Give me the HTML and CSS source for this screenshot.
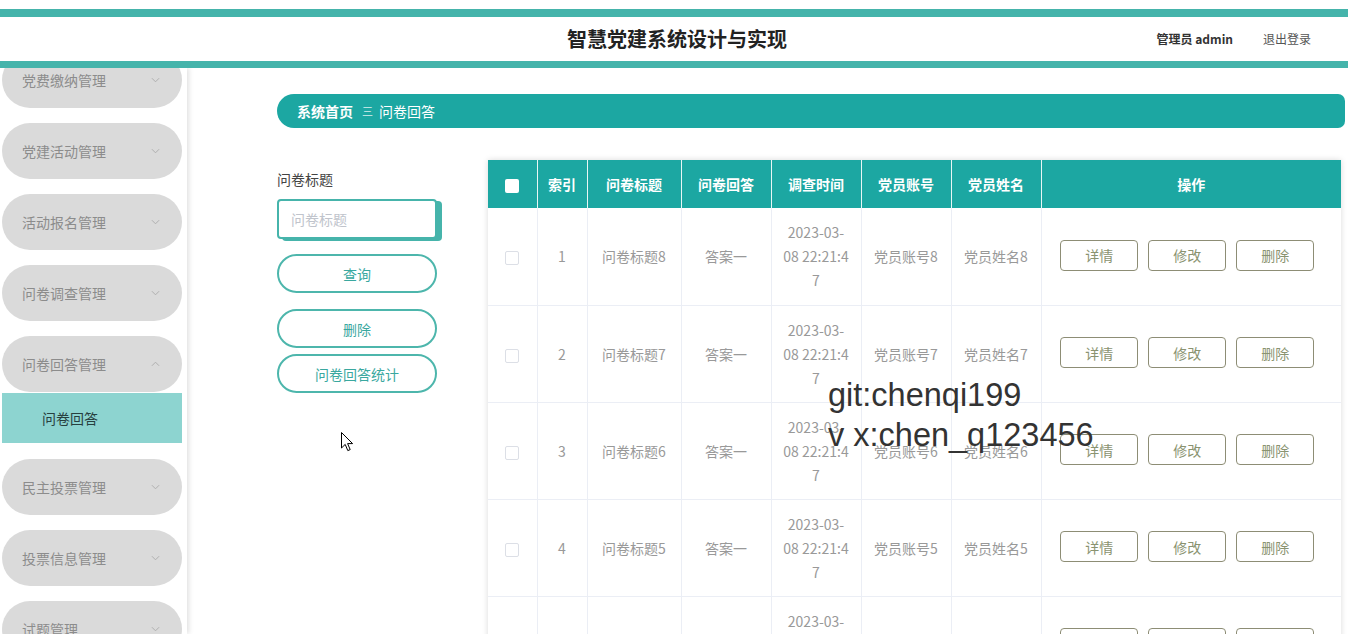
FILE: index.html
```html
<!DOCTYPE html>
<html lang="zh-CN">
<head>
<meta charset="utf-8">
<title>智慧党建系统设计与实现</title>
<link rel="stylesheet" href="styles.css">
</head>
<body>
<div class="topgap"></div>
<header class="header">
  <div class="header-side"></div>
  <h1 class="title">智慧党建系统设计与实现</h1>
  <div class="header-side header-right">
    <span class="user">管理员 admin</span>
    <span class="logout">退出登录</span>
  </div>
</header>
<div class="layout">
  <aside class="sidebar">
    <ul class="menu">
      <li class="pill"><span>党费缴纳管理</span><svg class="chev" viewBox="0 0 10 6"><polyline points="1,1 5,5 9,1"/></svg></li>
      <li class="pill"><span>党建活动管理</span><svg class="chev" viewBox="0 0 10 6"><polyline points="1,1 5,5 9,1"/></svg></li>
      <li class="pill"><span>活动报名管理</span><svg class="chev" viewBox="0 0 10 6"><polyline points="1,1 5,5 9,1"/></svg></li>
      <li class="pill"><span>问卷调查管理</span><svg class="chev" viewBox="0 0 10 6"><polyline points="1,1 5,5 9,1"/></svg></li>
      <li class="pill pill-open"><span>问卷回答管理</span><svg class="chev" viewBox="0 0 10 6"><polyline points="1,5 5,1 9,5"/></svg></li>
      <li class="submenu">问卷回答</li>
      <li class="pill"><span>民主投票管理</span><svg class="chev" viewBox="0 0 10 6"><polyline points="1,1 5,5 9,1"/></svg></li>
      <li class="pill"><span>投票信息管理</span><svg class="chev" viewBox="0 0 10 6"><polyline points="1,1 5,5 9,1"/></svg></li>
      <li class="pill"><span>试题管理</span><svg class="chev" viewBox="0 0 10 6"><polyline points="1,1 5,5 9,1"/></svg></li>
    </ul>
  </aside>
  <main class="main">
    <div class="breadcrumb">
      <span class="crumb-home">系统首页</span>
      <span class="crumb-sep">三</span>
      <span class="crumb-cur">问卷回答</span>
    </div>
    <div class="content">
      <form class="search">
        <label class="search-label">问卷标题</label>
        <input class="search-input" type="text" placeholder="问卷标题">
        <button type="button" class="pill-btn btn-query">查询</button>
        <button type="button" class="pill-btn btn-del">删除</button>
        <button type="button" class="pill-btn btn-stat">问卷回答统计</button>
      </form>
      <div class="table-wrap">
        <table class="grid">
          <colgroup>
            <col class="c-check"><col class="c-idx"><col class="c-title"><col class="c-ans"><col class="c-time"><col class="c-acc"><col class="c-name"><col class="c-op">
          </colgroup>
          <thead>
            <tr>
              <th><span class="hcheck"></span></th>
              <th>索引</th>
              <th>问卷标题</th>
              <th>问卷回答</th>
              <th>调查时间</th>
              <th>党员账号</th>
              <th>党员姓名</th>
              <th>操作</th>
            </tr>
          </thead>
          <tbody>
            <tr>
              <td><span class="check"></span></td><td>1</td><td>问卷标题8</td><td>答案一</td>
              <td>2023-03-<br>08 22:21:4<br>7</td><td>党员账号8</td><td>党员姓名8</td>
              <td class="ops"><button class="op-btn">详情</button><button class="op-btn">修改</button><button class="op-btn">删除</button></td>
            </tr>
            <tr>
              <td><span class="check"></span></td><td>2</td><td>问卷标题7</td><td>答案一</td>
              <td>2023-03-<br>08 22:21:4<br>7</td><td>党员账号7</td><td>党员姓名7</td>
              <td class="ops"><button class="op-btn">详情</button><button class="op-btn">修改</button><button class="op-btn">删除</button></td>
            </tr>
            <tr>
              <td><span class="check"></span></td><td>3</td><td>问卷标题6</td><td>答案一</td>
              <td>2023-03-<br>08 22:21:4<br>7</td><td>党员账号6</td><td>党员姓名6</td>
              <td class="ops"><button class="op-btn">详情</button><button class="op-btn">修改</button><button class="op-btn">删除</button></td>
            </tr>
            <tr>
              <td><span class="check"></span></td><td>4</td><td>问卷标题5</td><td>答案一</td>
              <td>2023-03-<br>08 22:21:4<br>7</td><td>党员账号5</td><td>党员姓名5</td>
              <td class="ops"><button class="op-btn">详情</button><button class="op-btn">修改</button><button class="op-btn">删除</button></td>
            </tr>
            <tr>
              <td><span class="check"></span></td><td>5</td><td>问卷标题4</td><td>答案一</td>
              <td>2023-03-<br>08 22:21:4<br>7</td><td>党员账号4</td><td>党员姓名4</td>
              <td class="ops"><button class="op-btn">详情</button><button class="op-btn">修改</button><button class="op-btn">删除</button></td>
            </tr>
          </tbody>
        </table>
      </div>
    </div>
  </main>
</div>
<div class="watermark">git:chenqi199
v x:chen_q123456</div>
<svg class="cursor" viewBox="0 0 13 20" width="13" height="20"><path d="M0.5,0.5 L0.5,16 L4.2,12.4 L6.8,18.6 L9.2,17.6 L6.6,11.6 L11.6,11.6 Z"/></svg>
</body>
</html>
```

FILE: styles.css
```css
* { box-sizing: border-box; }
html, body { margin: 0; padding: 0; }
body {
  width: 1348px;
  height: 634px;
  overflow: hidden;
  background: #fff;
  font-family: "Noto Sans CJK SC", "Noto Sans", sans-serif;
  font-size: 14px;
  color: #333;
  position: relative;
}

.topgap { height: 9px; background: #fff; }

.header {
  height: 59px;
  border-top: 8px solid #45b4ab;
  border-bottom: 7px solid #45b4ab;
  background: #fff;
  display: grid;
  grid-template-columns: 1fr auto 1fr;
  align-items: center;
}
.title {
  margin: 0;
  padding-left: 6px;
  font-size: 20px;
  line-height: 28px;
  font-weight: 700;
  color: #222;
}
.header-right {
  display: flex;
  justify-content: flex-end;
  align-items: center;
  padding-right: 37px;
  font-size: 12px;
  line-height: 18px;
}
.user { font-weight: 700; color: #333; margin-right: 30px; }
.logout { color: #555; }

.layout {
  display: flex;
  height: 566px;
  overflow: hidden;
}

.sidebar {
  width: 187px;
  flex: none;
  overflow: hidden;
  background: #fff;
  box-shadow: 2px 0 5px rgba(0, 0, 0, 0.12);
  position: relative;
  z-index: 1;
}
.menu {
  list-style: none;
  margin: -16px 0 0 0;
  padding: 0 5px 0 2px;
}
.pill {
  height: 56px;
  border-radius: 28px;
  background: #dadada;
  display: flex;
  align-items: center;
  justify-content: space-between;
  padding: 0 22px 0 20px;
  margin-bottom: 15px;
  color: #8c8c8c;
  font-size: 14px;
  line-height: 20px;
}
.pill-open { margin-bottom: 1px; }
.chev {
  width: 9px;
  height: 6px;
  fill: none;
  stroke: #aaa;
  stroke-width: 1;
}
.submenu {
  height: 50px;
  background: #8dd4d0;
  color: #27403f;
  font-size: 14px;
  line-height: 50px;
  padding-left: 40px;
  margin-bottom: 16px;
}

.main {
  flex: 1;
  padding: 26px 3px 0 90px;
  overflow: hidden;
}

.breadcrumb {
  height: 34px;
  border-radius: 17px 7px 7px 17px;
  background: #1ca7a2;
  color: #fff;
  display: flex;
  align-items: center;
  padding-left: 20px;
  font-size: 14px;
  line-height: 20px;
}
.crumb-home { font-weight: 700; }
.crumb-sep {
  font-size: 11px;
  margin: 0 6px 0 9px;
  color: rgba(255, 255, 255, 0.85);
}

.content {
  display: flex;
  align-items: flex-start;
  gap: 47px;
  margin-top: 32px;
}

.search {
  width: 164px;
  flex: none;
  padding-top: 9px;
  margin: 0;
}
.search-label {
  display: block;
  font-size: 14px;
  line-height: 20px;
  color: #444;
}
.search-input {
  display: block;
  width: 160px;
  height: 40px;
  margin-top: 10px;
  border: 2px solid #46b4ab;
  border-radius: 4px;
  box-shadow: 5px 2px 0 #46b4ab;
  padding: 0 12px;
  font-family: inherit;
  font-size: 14px;
  color: #333;
  outline: none;
  background: #fff;
}
.search-input::placeholder { color: #c0c4cc; }

.pill-btn {
  display: block;
  width: 160px;
  height: 39px;
  border: 2px solid #4db6ac;
  border-radius: 20px;
  background: #fff;
  color: #3aa89f;
  font-family: inherit;
  font-size: 14px;
  padding: 0;
  cursor: pointer;
}
.btn-query { margin-top: 15px; }
.btn-del { margin-top: 16px; }
.btn-stat { margin-top: 6px; }

.table-wrap {
  width: 853px;
  flex: none;
  background: #fff;
  box-shadow: 0 0 6px rgba(0, 0, 0, 0.15);
}
.grid {
  width: 853px;
  border-collapse: collapse;
  table-layout: fixed;
}
.c-check { width: 49px; }
.c-idx { width: 50px; }
.c-title { width: 94px; }
.c-ans { width: 90px; }
.c-time { width: 90px; }
.c-acc { width: 90px; }
.c-name { width: 90px; }
.c-op { width: 300px; }

.grid th {
  height: 48px;
  background: #1ca7a2;
  color: #fff;
  font-weight: 700;
  font-size: 14px;
  line-height: 20px;
  text-align: center;
  padding: 0;
  border-right: 1px solid #e8f6f5;
}
.grid th:last-child { border-right: none; }
.hcheck {
  display: inline-block;
  width: 14px;
  height: 14px;
  background: #fff;
  border-radius: 2px;
  vertical-align: middle;
}
.grid td {
  height: 97px;
  text-align: center;
  color: #999;
  font-size: 14px;
  line-height: 24px;
  padding: 0 8px;
  border-right: 1px solid #ebeef5;
  border-bottom: 1px solid #ebeef5;
}
.grid td.ops {
  border-right: none;
  padding: 0 8px 2px 0;
  font-size: 0;
}
.check {
  display: inline-block;
  width: 14px;
  height: 14px;
  border: 1px solid #dcdfe6;
  border-radius: 2px;
  background: #fff;
  vertical-align: middle;
}
.op-btn {
  width: 78px;
  height: 31px;
  margin: 0 5px;
  border: 1px solid #8d8d75;
  border-radius: 4px;
  background: #fff;
  color: #8a9370;
  font-family: inherit;
  font-size: 14px;
  padding: 0;
  vertical-align: middle;
}

.watermark {
  position: absolute;
  left: 828px;
  top: 375px;
  font-family: "Liberation Sans", Arial, sans-serif;
  font-size: 32.5px;
  line-height: 40px;
  color: #333;
  white-space: pre;
  pointer-events: none;
  z-index: 5;
}
.cursor {
  position: absolute;
  left: 341px;
  top: 432px;
  fill: #fff;
  stroke: #000;
  stroke-width: 1;
  z-index: 6;
}
```
